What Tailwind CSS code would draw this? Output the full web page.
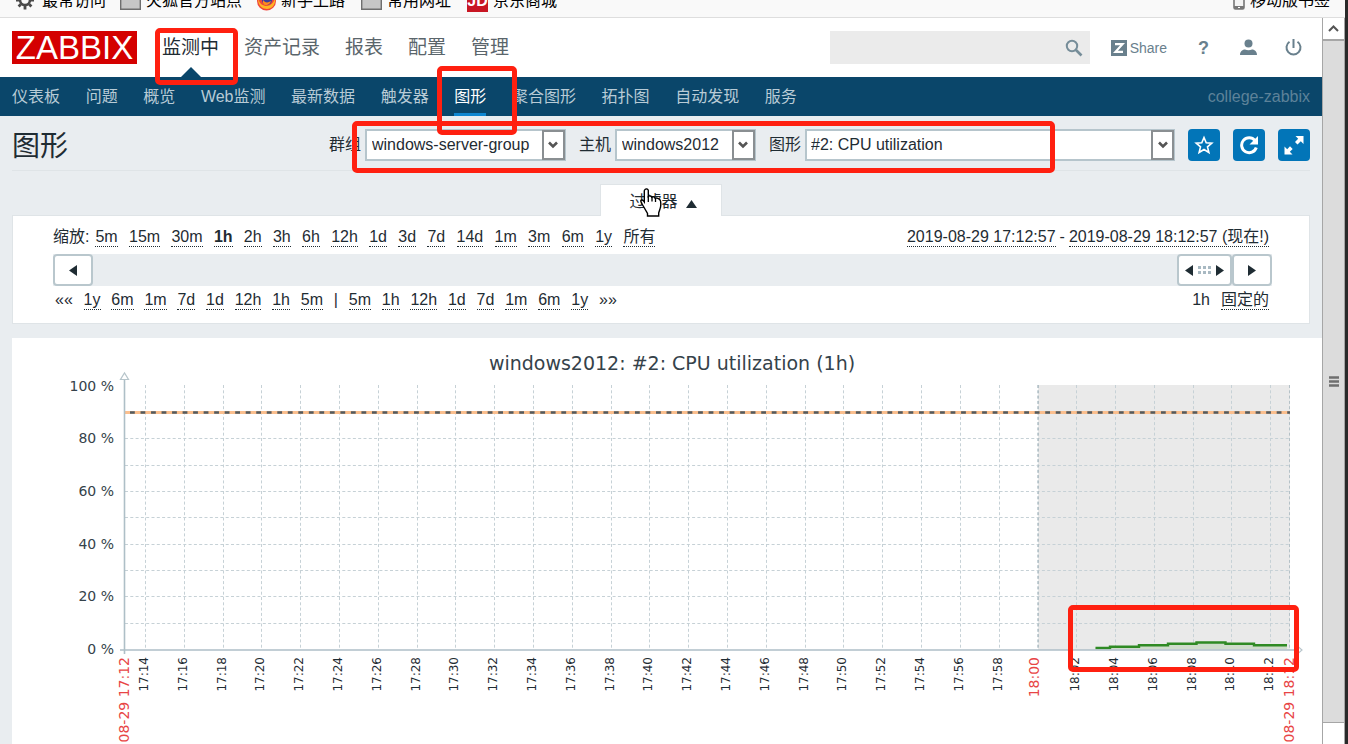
<!DOCTYPE html>
<html lang="zh-CN">
<head>
<meta charset="utf-8">
<meta name="viewport" content="width=device-width, initial-scale=1">
<title>图形 - Zabbix</title>
<script src="https://cdn.jsdelivr.net/npm/@tailwindcss/browser@4"></script>
</head>
<body class="relative flex h-screen flex-col overflow-hidden border-r-[3px] border-[#2a2a2a] bg-white font-['Liberation_Sans','Noto_Sans_CJK_SC',sans-serif] text-base text-[#1f2c33]">

<!-- browser bookmarks bar -->
<div class="flex h-[18px] shrink-0 items-end overflow-hidden border-b border-[#dedede] bg-[#f9f9f9] pl-[15px] pr-[15px] pb-1 leading-6 text-black">
  <a href="#" class="flex h-6 items-center gap-[7px]">
    <svg class="size-[20px]" viewBox="0 0 20 20" fill="none" stroke="#4a4a4a"><circle cx="10" cy="9" r="5" stroke-width="2.6"/><path d="M10 0v3M10 15v3.500M1 9h3M16 9h3M3.600 2.600l2.200 2.200M14.200 13.200l2.200 2.200M16.400 2.600l-2.200 2.200M5.800 13.200l-2.200 2.200" stroke-width="2.800"/></svg>
    <span class="whitespace-nowrap">最常访问</span></a>
  <a href="#" class="ml-[14px] flex h-6 items-center gap-[5px]">
    <svg class="size-[21px]" viewBox="0 0 21 21"><path d="M.7 3h8l2 2h9.600v13.200H.7z" fill="#c6c6c6" stroke="#6e6e6e" stroke-width="1.400"/></svg>
    <span class="whitespace-nowrap">火狐官方站点</span></a>
  <a href="#" class="ml-[14px] flex h-6 items-center gap-[4px]">
    <svg class="size-[21px]" viewBox="0 0 21 21"><circle cx="10.500" cy="10" r="9.500" fill="#f0453a"/><path d="M2 7c-.5 7 4 11 9 11 6 0 9.500-6 8-13 0 4-2 9-8 10-5 0-8-3-9-8z" fill="#ffb524"/><circle cx="11" cy="9" r="5" fill="#3b3d9e"/><path d="M7 9c2 3 5 3 8 1-1 4-6 6-8 2z" fill="#ff8a1c"/></svg>
    <span class="whitespace-nowrap">新手上路</span></a>
  <a href="#" class="ml-[16px] flex h-6 items-center gap-[5px]">
    <svg class="size-[21px]" viewBox="0 0 21 21"><path d="M.7 3h8l2 2h9.600v13.200H.7z" fill="#c6c6c6" stroke="#6e6e6e" stroke-width="1.400"/></svg>
    <span class="whitespace-nowrap">常用网址</span></a>
  <a href="#" class="ml-[16px] flex h-6 items-center gap-[5px]">
    <span class="flex size-[21px] items-center justify-center bg-[#c81623] text-base font-bold leading-none text-white">JD</span>
    <span class="whitespace-nowrap">京东商城</span></a>
  <a href="#" class="ml-auto flex h-6 items-center gap-[5px]">
    <svg class="h-[18px] w-[12px]" viewBox="0 0 12 18"><rect x="1" y="1" width="10" height="16" rx="1.500" fill="#f4f4f4" stroke="#777" stroke-width="1.600"/><path d="M1 14h10v3H1z" fill="#777"/><path d="M5 15.500h2" stroke="#fff"/></svg>
    <span class="whitespace-nowrap">移动版书签</span></a>
</div>

<div class="flex min-h-0 flex-1">
  <div class="flex min-w-0 flex-1 flex-col overflow-hidden bg-[#e9edf0]">

    <header class="flex h-[59px] shrink-0 items-center bg-white pl-3 pr-5">
      <a href="#" class="flex h-[33px] w-[125px] shrink-0 items-center justify-center bg-[#d40000] text-[33px] leading-[33px] text-white">ZABBIX</a>
      <nav class="ml-[25px] flex h-full items-center gap-[25px] whitespace-nowrap text-[19px] text-[#5a656b]">
        <a href="#" class="relative flex h-full items-center pt-[2px] text-[#1f2c33]">监测中
          <svg class="absolute bottom-0 left-[19px] h-[10px] w-[20px]" viewBox="0 0 20 10"><path d="M0 10L10 0l10 10z" fill="#0a466a"/></svg></a>
        <a href="#" class="pt-[2px]">资产记录</a><a href="#" class="pt-[2px]">报表</a><a href="#" class="pt-[2px]">配置</a><a href="#" class="pt-[2px]">管理</a>
      </nav>
      <form class="ml-auto flex h-[33px] w-[260px] items-center bg-[#ebebeb] pr-[7px]">
        <input type="text" aria-label="搜索" class="min-w-0 flex-1 bg-transparent px-2 outline-none">
        <button type="button" aria-label="搜索"><svg class="size-[18px]" viewBox="0 0 18 18" fill="none" stroke="#768d99"><circle cx="7" cy="7" r="5.200" stroke-width="2"/><path d="M11 11l5.500 5.500" stroke-width="2.600"/></svg></button>
      </form>
      <a href="#" class="ml-[21px] flex items-center gap-[3px] text-sm text-[#69808d]">
        <svg class="size-4" viewBox="0 0 16 16"><path d="M0 0h16v16H0z" fill="#69808d"/><path d="M4 4.200h7.500L4.500 11.800H12" fill="none" stroke="#fff" stroke-width="2.200"/></svg>Share</a>
      <a href="#" class="ml-[31px] text-lg font-bold text-[#69808d]">?</a>
      <a href="#" class="ml-[31px]" aria-label="用户"><svg class="size-[17px]" viewBox="0 0 17 17" fill="#69808d"><circle cx="8.500" cy="4.500" r="4"/><path d="M0 16c0-4 3-5.500 5-5.500 2 1 5 1 7 0 2 0 5 1.500 5 5.500z"/></svg></a>
      <a href="#" class="ml-7" aria-label="退出"><svg class="size-[17px]" viewBox="0 0 17 17" fill="none" stroke="#69808d" stroke-width="2"><path d="M8.500 0v9M4.500 2.800a7 7 0 1 0 8 0"/></svg></a>
    </header>

    <div class="flex h-[39px] shrink-0 items-center justify-between bg-[#0a466a] pl-3 pr-3 text-[#b8cbd6]">
      <nav class="flex h-full w-[785px] items-center justify-between whitespace-nowrap">
        <a href="#">仪表板</a><a href="#">问题</a><a href="#">概览</a><a href="#">Web监测</a><a href="#">最新数据</a><a href="#">触发器</a>
        <a href="#" class="flex h-full items-center border-b-[3px] border-[#0f86d0] pt-[3px] text-white">图形</a>
        <a href="#">聚合图形</a><a href="#">拓扑图</a><a href="#">自动发现</a><a href="#">服务</a>
      </nav>
      <span class="text-[#5d8299]">college-zabbix</span>
    </div>

    <div class="mx-3 flex h-[55px] shrink-0 items-center border-b border-[#dfe4e7] pt-1">
      <h1 class="pt-1 text-[28px] leading-8">图形</h1>
      <form class="ml-auto flex items-center">
        <label for="group" class="mr-1">群组</label>
        <span class="relative mr-[13px] h-8 w-[201px]">
          <select id="group" class="h-full w-full appearance-none border-2 border-[#b6c5cc] bg-white pl-[5px]"><option>windows-server-group</option></select>
          <span class="pointer-events-none absolute inset-y-px right-px flex w-[23px] items-center justify-center border-2 border-[#8a8f92] bg-white"><svg class="h-2 w-[10px]" viewBox="0 0 10 8"><path d="M1 1.500l4 4 4-4" fill="none" stroke="#555" stroke-width="2.600"/></svg></span>
        </span>
        <label for="host" class="mr-1">主机</label>
        <span class="relative mr-[13px] h-8 w-[141px]">
          <select id="host" class="h-full w-full appearance-none border-2 border-[#b6c5cc] bg-white pl-[5px]"><option>windows2012</option></select>
          <span class="pointer-events-none absolute inset-y-px right-px flex w-[23px] items-center justify-center border-2 border-[#8a8f92] bg-white"><svg class="h-2 w-[10px]" viewBox="0 0 10 8"><path d="M1 1.500l4 4 4-4" fill="none" stroke="#555" stroke-width="2.600"/></svg></span>
        </span>
        <label for="graph" class="mr-1">图形</label>
        <span class="relative h-8 w-[370px]">
          <select id="graph" class="h-full w-full appearance-none border-2 border-[#b6c5cc] bg-white pl-[4px]"><option>#2: CPU utilization</option></select>
          <span class="pointer-events-none absolute inset-y-px right-px flex w-[23px] items-center justify-center border-2 border-[#8a8f92] bg-white"><svg class="h-2 w-[10px]" viewBox="0 0 10 8"><path d="M1 1.500l4 4 4-4" fill="none" stroke="#555" stroke-width="2.600"/></svg></span>
        </span>
        <span class="ml-[13px] flex gap-[13px]">
          <button type="button" aria-label="收藏" class="flex size-8 items-center justify-center rounded-sm bg-[#0275b8]"><svg class="size-[20px]" viewBox="0 0 20 20"><path d="M10 2.500l2.200 5.300 5.600.4-4.300 3.700 1.400 5.600-4.900-3-4.900 3 1.400-5.600L2.200 8.200l5.600-.4z" fill="none" stroke="#fff" stroke-width="1.600"/></svg></button>
          <button type="button" aria-label="刷新" class="flex size-8 items-center justify-center rounded-sm bg-[#0275b8]"><svg class="size-[20px]" viewBox="0 0 20 20"><path d="M16 5.500A7.500 7.500 0 1 0 17.300 12.500" fill="none" stroke="#fff" stroke-width="3"/><path d="M19 1v8.500h-8.500z" fill="#fff"/></svg></button>
          <button type="button" aria-label="全屏" class="flex size-8 items-center justify-center rounded-sm bg-[#0275b8]"><svg class="size-[20px]" viewBox="0 0 20 20" fill="#fff"><path d="M11.500 1H19.500V9L16.800 6.300 13.500 9.500 11 7 14.200 3.700zM.5 11.500L3.200 14.200 6 11.300 8.700 14 5.800 16.800 8.500 19.500H.5z"/></svg></button>
        </span>
      </form>
    </div>

    <!-- filter -->
    <div class="mt-[13px] flex shrink-0 justify-center">
      <button type="button" class="relative z-10 -mb-px flex h-8 w-[122px] items-center justify-center gap-[8px] border border-b-0 border-[#dfe4e7] bg-white pl-1 pt-[2px]">过滤器
        <svg class="mt-[4px] h-2 w-[11px]" viewBox="0 0 11 8"><path d="M0 8L5.500 0 11 8z" fill="#1f2c33"/></svg></button>
    </div>
    <section class="mx-3 shrink-0 border border-[#dfe4e7] bg-white pl-10 pr-[37px] pt-3 pb-[13px] leading-[18px]">
      <div class="flex h-[19px] items-start justify-between whitespace-nowrap pr-[3px]">
        <div class="flex">
          <span class="mr-[6px]">缩放:</span>
          <nav class="flex w-[560px] justify-between [&>a]:border-b [&>a]:border-dotted [&>a]:border-[#1f2c33]">
            <a href="#">5m</a><a href="#">15m</a><a href="#">30m</a><a href="#" class="font-bold">1h</a><a href="#">2h</a><a href="#">3h</a><a href="#">6h</a><a href="#">12h</a><a href="#">1d</a><a href="#">3d</a><a href="#">7d</a><a href="#">14d</a><a href="#">1m</a><a href="#">3m</a><a href="#">6m</a><a href="#">1y</a><a href="#">所有</a>
          </nav>
        </div>
        <div class="flex gap-1">
          <a href="#" class="border-b border-dotted border-[#1f2c33]">2019-08-29 17:12:57</a><span>-</span><a href="#" class="border-b border-dotted border-[#1f2c33]">2019-08-29 18:12:57 (现在!)</a>
        </div>
      </div>
      <div class="mt-[7px] flex h-8 bg-[#e9edf0]">
        <button type="button" aria-label="向前" class="flex w-10 items-center justify-center rounded-sm border-2 border-[#b9c7cd] bg-white"><svg class="h-[11px] w-2" viewBox="0 0 8 11"><path d="M8 0v11L0 5.500z" fill="#1f2c33"/></svg></button>
        <button type="button" aria-label="时间范围" class="ml-auto flex w-[55px] items-center justify-between rounded-sm border-2 border-[#b9c7cd] bg-white px-[6px]"><svg class="h-[11px] w-2" viewBox="0 0 8 11"><path d="M8 0v11L0 5.500z" fill="#1f2c33"/></svg><svg class="h-2 w-[13px]" viewBox="0 0 13 8" fill="#a8b9c2"><path d="M0 0h3v3H0zM5 0h3v3H5zM10 0h3v3h-3zM0 5h3v3H0zM5 5h3v3H5zM10 5h3v3h-3z"/></svg><svg class="h-[11px] w-2" viewBox="0 0 8 11"><path d="M0 0v11l8-5.500z" fill="#1f2c33"/></svg></button>
        <button type="button" aria-label="向后" class="flex w-10 items-center justify-center rounded-sm border-2 border-[#b9c7cd] bg-white"><svg class="h-[11px] w-2" viewBox="0 0 8 11"><path d="M0 0v11l8-5.500z" fill="#1f2c33"/></svg></button>
      </div>
      <div class="mt-[5px] flex h-[19px] items-start justify-between whitespace-nowrap pl-[2px] pr-[3px]">
        <nav class="flex w-[562px] justify-between [&>a]:border-b [&>a]:border-dotted [&>a]:border-[#1f2c33]">
          <span>««</span><a href="#">1y</a><a href="#">6m</a><a href="#">1m</a><a href="#">7d</a><a href="#">1d</a><a href="#">12h</a><a href="#">1h</a><a href="#">5m</a><span>|</span><a href="#">5m</a><a href="#">1h</a><a href="#">12h</a><a href="#">1d</a><a href="#">7d</a><a href="#">1m</a><a href="#">6m</a><a href="#">1y</a><span>»»</span>
        </nav>
        <div class="flex gap-[11px]"><span>1h</span><a href="#" class="border-b border-dotted border-[#1f2c33]">固定的</a></div>
      </div>
    </section>

    <!-- graph -->
    <section class="ml-3 mt-[14px] min-h-0 flex-1 overflow-hidden bg-white">
      <svg id="chart" class="block w-full font-['DejaVu_Sans',sans-serif]" viewBox="12 338 1310 450" role="img" aria-label="windows2012: #2: CPU utilization (1h)">
        <rect x="1038" y="385" width="252" height="265" fill="#eaeaea"/>
        <g id="grid" fill="none" stroke="#c6d1d6" stroke-dasharray="3 2.300"></g>
        <path d="M1038.500 385V650M1289.500 385V650" stroke="#b4c1c7" stroke-dasharray="3 2.300"/>
        <path d="M1095.500 649v-1.500H1110v-1.500h29v-1.200h29v-1.600h28.500v-1.500h29v1.500h29v1.200h32.500V649z" fill="#cfdccb"/>
        <path d="M1095.500 648H1110V646.800H1139V645.200H1168V643.800H1196.500V642.500H1225.500V643.800H1254V645.200H1287" fill="none" stroke="#2f8a24" stroke-width="2.400"/>
        <path d="M124.500 412.500H1290" stroke="#fbbf8e" stroke-width="3"/>
        <path d="M130 412.500H1290" stroke="#515b60" stroke-width="2.400" stroke-dasharray="4.800 5.720"/>
        <path d="M124.500 379V654M120 650H1298" fill="none" stroke="#aebfc7" stroke-width="1.600"/>
        <path d="M120.500 379.500h8L124.500 373zM1298 646.500v7l4-3.500z" fill="#fff" stroke="#b7c5cb" stroke-width="1.200"/>
        <text x="672" y="370" text-anchor="middle" font-size="19" fill="#35424a">windows2012: #2: CPU utilization (1h)</text>
        <g id="ylabels" font-size="14" fill="#35424a" text-anchor="end"></g>
        <g id="xlabels" font-size="12" fill="#1f2c33" text-anchor="end"></g>
        <g id="redlabels" font-size="14" fill="#e84545" text-anchor="end"></g>
      </svg>
    </section>
  </div>

  <!-- page scrollbar -->
  <div class="flex w-[23px] shrink-0 flex-col border-x border-[#a6a6a6] bg-white" aria-hidden="true">
    <div class="flex h-[23px] items-center justify-center border-b-2 border-[#a6a6a6]"><svg class="h-[7px] w-[11px]" viewBox="0 0 11 7"><path d="M1 6l4.500-4.500L10 6" fill="none" stroke="#555" stroke-width="2"/></svg></div>
    <div class="flex flex-1 flex-col items-center justify-center border-b border-[#a6a6a6] bg-[#dcdcdc]">
      <svg class="h-[11px] w-[10px]" viewBox="0 0 10 11"><path d="M0 1.500h10M0 5.500h10M0 9.500h10" stroke="#6f6f6f" stroke-width="2.400"/></svg>
    </div>
    <div class="h-[21px]"></div>
  </div>
</div>

<!-- mouse pointer -->
<svg class="absolute left-[640px] top-[188px] z-20 h-[30px] w-[24px]" viewBox="0 0 24 30"><path d="M5 1.500c1-1 3-.7 3.300.8V8.500c1.200-1 3-.7 3.500.7 1.200-.8 2.800-.4 3.300 1 1.500-.5 4 .3 5 1.800.9 1.500.8 3.500.6 6-.4 3-1.500 5-2 7V28H7.500v-2.500L3.500 18.500C2 16 .8 14 .8 12.800c.5-1.500 2.200-1 3.500 1V3c0-.6.300-1.200.7-1.500z" fill="#fff" stroke="#000" stroke-width="1.400"/><path d="M8.300 8v6M12 9v4.500M15.500 10v4" stroke="#000" stroke-width="1.300"/></svg>

<!-- highlight frames -->
<div class="pointer-events-none absolute left-[155px] top-[28px] z-30 h-[57px] w-[83px] rounded-[5px] border-[5px] border-[#ff2010]"></div>
<div class="pointer-events-none absolute left-[437px] top-[66px] z-30 h-[69px] w-[80px] rounded-[5px] border-[5px] border-[#ff2010]"></div>
<div class="pointer-events-none absolute left-[352px] top-[121px] z-30 h-[52px] w-[703px] rounded-[5px] border-[5px] border-[#ff2010]"></div>
<div class="pointer-events-none absolute left-[1068px] top-[605px] z-30 h-[67px] w-[231px] rounded-[5px] border-[5px] border-[#ff2010]"></div>

<script>
const NS = 'http://www.w3.org/2000/svg';
const add = (parent, tag, attrs, text) => {
  const el = document.createElementNS(NS, tag);
  for (const k in attrs) el.setAttribute(k, attrs[k]);
  if (text) el.textContent = text;
  document.getElementById(parent).appendChild(el);
};
const vertical = (group, x, y, text) =>
  add(group, 'text', { transform: `translate(${x} ${y}) rotate(-90)` }, text);

// horizontal grid and value labels, one line per 10 %
for (let i = 0; i <= 10; i++) {
  const y = Math.round(649 - i * 26.35) + 0.5;
  if (i > 0 && i < 9) add('grid', 'path', { d: `M125 ${y}H1290` });
  if (i % 2 === 0) add('ylabels', 'text', { x: 114, y: y + 4 }, `${i * 10} %`);
}
// vertical grid and time labels, one line per 2 minutes
for (let i = 0; i < 30; i++) {
  const x = Math.round(145 + i * 38.8) + 0.5;
  const m = 14 + i * 2;
  add('grid', 'path', { d: `M${x} 385V650` });
  if (m === 60) { vertical('redlabels', x + 1.5, 657, '18:00'); continue; }
  const label = `${m < 60 ? 17 : 18}:${String(m % 60).padStart(2, '0')}`;
  vertical('xlabels', x + 2, 657, label);
}
vertical('redlabels', 129, 657, '08-29 17:12');
vertical('redlabels', 1294, 657, '08-29 18:12');
</script>
</body>
</html>
